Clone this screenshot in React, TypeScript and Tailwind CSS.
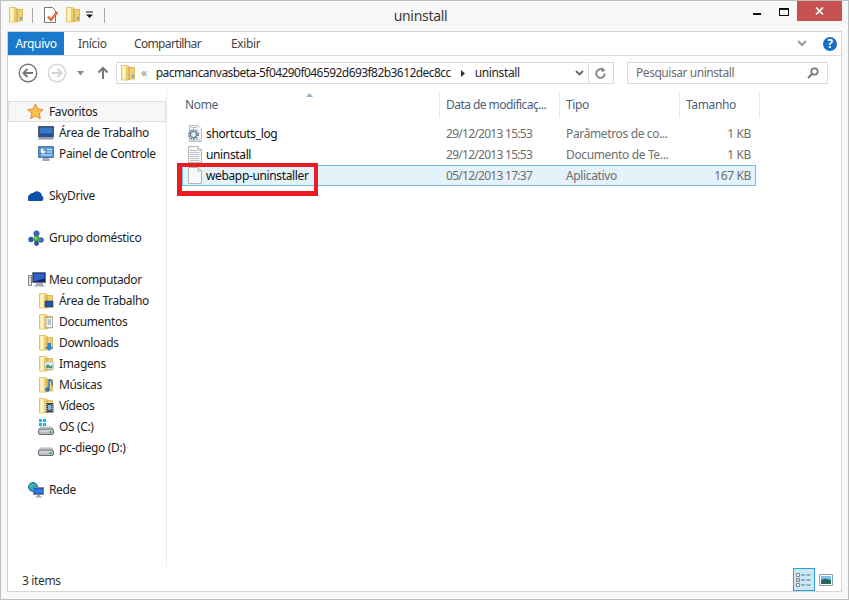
import type { ReactNode } from 'react'

const Folder = ({ children, dot }: { children?: ReactNode; dot?: boolean }) => (
  <svg width="16" height="16" viewBox="0 0 16 16" className="shrink-0">
    <path d="M8 2.500h6.500v11.500H8z" fill="#efcf72" stroke="#dcb95c" />
    <path d="M1.500 .5h6l1.500 1v13.500H1.500z" fill="#f9ebb0" stroke="#e3c569" />
    <path d="M3 1.500h1.500v13H3z" fill="#fff6d0" />
    <path d="M6 1.500h2v13.500H6z" fill="#eccb6c" />
    <path d="M8.500 1.500h1v13.500h-1z" fill="#c69c3c" />
    {dot && <path d="M12 10h1.500v2.500H12z" fill="#3aa0d8" />}
    {children}
  </svg>
)

const DocLines = ({ plain }: { plain?: boolean }) => (
  <svg width="16" height="17" viewBox="0 0 16 17" className="shrink-0">
    <path d="M1.500 .5h9.500l3.500 3.500v12.500h-13z" fill="#f8f8f8" stroke="#b4b4b4" />
    <path d="M11 .5v3.500h3.500" fill="#e4e4e4" stroke="#b4b4b4" />
    {!plain && (
      <path d="M3 4.500h7M3 6.500h9.500M3 8.500h9.500M3 10.500h9.500M3 12.500h9.500M3 14.500h9.500" stroke="#bcc5cf" strokeWidth="1" />
    )}
  </svg>
)

const GearDoc = () => (
  <svg width="16" height="17" viewBox="0 0 16 17" className="shrink-0">
    <path d="M2.500 .5h8.500l3.500 3.500v12.500h-12z" fill="#f6f6f6" stroke="#bcbcbc" />
    <path d="M4 2.500h6M4 15h9" stroke="#b4bcc6" />
    <circle cx="6.500" cy="9.500" r="4.600" fill="none" stroke="#74859a" strokeWidth="2" strokeDasharray="1.600 1.300" />
    <circle cx="6.500" cy="9.500" r="3.200" fill="#cfe0f2" stroke="#44658f" />
    <circle cx="6.500" cy="9.500" r="1.200" fill="#fff" />
  </svg>
)

const Desktop = () => (
  <svg width="16" height="14" viewBox="0 0 16 14" className="shrink-0">
    <path d="M.5 .5h15v10.500H.5z" fill="#1f3f7c" stroke="#51586a" />
    <path d="M1.500 1.500h13v8h-13z" fill="#3a79c8" />
    <path d="M1.500 7.500h13v2h-13z" fill="#1b4b9a" />
    <path d="M.5 11.500h15v2H.5z" fill="#8d96a4" />
  </svg>
)

const Panel = () => (
  <svg width="16" height="16" viewBox="0 0 16 16" className="shrink-0">
    <path d="M.5 .5h15v11H.5z" fill="#4e93dd" stroke="#58789c" />
    <circle cx="5" cy="5" r="2.400" fill="#fff" />
    <path d="M5 5V2.600A2.400 2.400 0 0 1 7.400 5z" fill="#e9842b" />
    <path d="M9 3.500h5M9 6h5M3 9h11" stroke="#e8f2fc" />
    <path d="M5 12h6l1 3H4z" fill="#a8a8a8" />
  </svg>
)

const Computer = () => (
  <svg width="18" height="16" viewBox="0 0 18 16" className="shrink-0">
    <path d="M.5 3.500h3v10h-3z" fill="#dfe3e8" stroke="#7b8490" />
    <path d="M1.500 5.500h1" stroke="#35b04a" />
    <path d="M4.500 .5h13v10h-13z" fill="#16285f" stroke="#6f7784" />
    <path d="M5.500 1.500h11v5l-11 3z" fill="#2e62cc" />
    <path d="M8 11h7v2H8zM6.500 13h10v1.500h-10z" fill="#a9afb8" />
  </svg>
)

const Drive = ({ win }: { win?: boolean }) => (
  <svg width="16" height="16" viewBox="0 0 16 16" className="shrink-0">
    {win && <path d="M1 0h3v3H1zM5 0h3v3H5zM1 4h3v3H1zM5 4h3v3H5z" fill="#12b8f0" />}
    <path d="M1 10.500 2.500 8h11L15 10.500z" fill="#e6e6e6" stroke="#8e8e8e" strokeWidth=".7" />
    <rect x=".5" y="10" width="15" height="5.500" rx="1.500" fill="#b7bdc2" stroke="#6a6f74" />
    <path d="M2 12h12" stroke="#e8eaec" />
    <rect x="11.500" y="12" width="2" height="2" fill="#3db03d" />
  </svg>
)

const Network = () => (
  <svg width="16" height="16" viewBox="0 0 16 16" className="shrink-0">
    <circle cx="5" cy="5" r="4.500" fill="#2f9fd8" stroke="#1b6fa8" />
    <path d="M1.500 3.500 4 1.500l2 1-1.500 2.500L3 6z" fill="#5cc05a" />
    <path d="M5.500 5.500h10v7h-10z" fill="#1b3f9c" stroke="#7f8792" />
    <path d="M6.500 6.500h8v5h-8z" fill="#2f7be0" />
    <path d="M9 13h3v1.500h2v1H7.500v-1H9z" fill="#9aa2ac" />
  </svg>
)

const Homegroup = () => (
  <svg width="16" height="16" viewBox="0 0 16 16" className="shrink-0">
    <circle cx="8.500" cy="3.500" r="3" fill="#3a62b8" />
    <circle cx="3" cy="9.500" r="2.700" fill="#2b5aa8" />
    <circle cx="13" cy="10" r="2.800" fill="#3f68c0" />
    <circle cx="8.500" cy="9" r="3.200" fill="#4fa83a" />
    <circle cx="8.500" cy="13.500" r="2.400" fill="#2b4f9c" />
    <circle cx="7.700" cy="8.200" r="1" fill="#bfe8a8" />
  </svg>
)

const SideRow = ({ icon, label, sub, active }: { icon: ReactNode; label: string; sub?: boolean; active?: boolean }) => (
  <div
    className={`flex h-[21px] items-center border ${sub ? 'pl-[29px]' : 'pl-[19px]'} ${
      active ? 'border-[#dedede] bg-[#f7f7f7]' : 'border-transparent'
    }`}
  >
    <span className="flex w-[21px] items-center">{icon}</span>
    <span className="text-[#1e1e1e]">{label}</span>
  </div>
)

const Spacer = () => <div className="h-[21px]" />

const files = [
  { name: 'shortcuts_log', date: '29/12/2013 15:53', type: 'Parâmetros de co...', size: '1 KB', icon: <GearDoc /> },
  { name: 'uninstall', date: '29/12/2013 15:53', type: 'Documento de Te...', size: '1 KB', icon: <DocLines /> },
  { name: 'webapp-uninstaller', date: '05/12/2013 17:37', type: 'Aplicativo', size: '167 KB', icon: <DocLines plain /> },
]

export default function App() {
  return (
    <div className="relative flex h-[600px] w-[849px] flex-col overflow-hidden border border-[#bdbdbd] bg-[#f8f8f8] px-[6px] pb-[7px] font-['Noto_Sans',sans-serif] text-[12px] tracking-[-0.36px]">
      {/* title bar */}
      <div className="relative flex h-[30px] shrink-0 items-start">
        <div className="flex items-center pt-[6px] pl-[1px]">
          <Folder dot />
          <div className="ml-[8px] h-[15px] w-px bg-[#a8a8a8]" />
          <svg width="16" height="16" viewBox="0 0 16 16" className="ml-[10px]">
            <path d="M1.500 .5h8l3 3v12h-11z" fill="#fff" stroke="#777" />
            <path d="M5 9.500 8 13l6.500-8" fill="none" stroke="#e2683a" strokeWidth="2.400" />
          </svg>
          <span className="ml-[6px]"><Folder dot /></span>
          <svg width="8" height="8" viewBox="0 0 8 8" className="ml-[5px]">
            <path d="M0 1h7" stroke="#111" />
            <path d="M0 3.500h7L3.500 7z" fill="#111" />
          </svg>
          <div className="ml-[10px] h-[15px] w-px bg-[#a8a8a8]" />
        </div>
        <div className="absolute left-0 right-[8px] top-[5px] text-center text-[14px] leading-[20px] tracking-[-0.3px] text-[#3a3a3a]">uninstall</div>
        <div className="ml-auto flex">
          <div className="flex h-[20px] w-[26px] items-start justify-center pt-[12px]">
            <div className="h-[2px] w-[8px] bg-[#111]" />
          </div>
          <div className="flex h-[20px] w-[27px] items-start justify-center pt-[7px]">
            <div className="h-[8px] w-[10px] border border-t-2 border-[#111]" />
          </div>
          <div className="flex h-[20px] w-[45px] items-center justify-center bg-[#c75050]">
            <svg width="9" height="8" viewBox="0 0 9 8">
              <path d="M1 .5l7 7M8 .5l-7 7" stroke="#fff" strokeWidth="1.700" />
            </svg>
          </div>
        </div>
      </div>

      <div className="flex min-h-0 flex-1 flex-col border border-[#d4d4d4] bg-white">
        {/* ribbon tabs */}
        <div className="flex h-[24px] shrink-0 items-center border-b border-[#dadbdc]">
          <div className="flex h-[23px] w-[56px] items-center justify-center bg-[#1979ca] text-[#fff]">Arquivo</div>
          <div className="ml-[14px] w-[56px] text-[#444]">Início</div>
          <div className="w-[97px] tracking-[-0.65px] text-[#444]">Compartilhar</div>
          <div className="text-[#444]">Exibir</div>
          <svg width="10" height="7" viewBox="0 0 10 7" className="ml-auto mr-[16px]">
            <path d="M1 1l4 4 4-4" fill="none" stroke="#9a9a9a" strokeWidth="2" />
          </svg>
          <div className="mr-[4px] flex h-[14px] w-[14px] items-center justify-center rounded-full bg-[#1370c4] text-[12px] font-bold tracking-normal text-white">?</div>
        </div>

        {/* address row */}
        <div className="flex h-[34px] shrink-0 items-center">
          <svg width="20" height="20" viewBox="0 0 20 20" className="ml-[10px]">
            <circle cx="10" cy="10" r="8.700" fill="#fff" stroke="#777" strokeWidth="1.400" />
            <path d="M15 10H6M9.500 6 5.500 10l4 4" fill="none" stroke="#777" strokeWidth="2" />
          </svg>
          <svg width="20" height="20" viewBox="0 0 20 20" className="ml-[9px]">
            <circle cx="10" cy="10" r="8.700" fill="#fff" stroke="#d4d4d4" strokeWidth="1.400" />
            <path d="M5 10h9M10.500 6l4 4-4 4" fill="none" stroke="#d4d4d4" strokeWidth="2" />
          </svg>
          <svg width="8" height="5" viewBox="0 0 8 5" className="ml-[10px]">
            <path d="M0 0h7L3.500 4.500z" fill="#8a8a8a" />
          </svg>
          <svg width="12" height="14" viewBox="0 0 12 14" className="ml-[12px]">
            <path d="M6 13V2M1.500 6.500 6 2l4.500 4.500" fill="none" stroke="#777" strokeWidth="2" />
          </svg>
          <div className="ml-[7px] flex h-[22px] w-[498px] items-center border border-[#d9d9d9]">
            <span className="ml-[3px]"><Folder dot /></span>
            <span className="ml-[5px] text-[#888]">«</span>
            <span className="ml-[9px] tracking-[-0.56px] text-[#1e1e1e]">pacmancanvasbeta-5f04290f046592d693f82b3612dec8cc</span>
            <svg width="5" height="7" viewBox="0 0 5 7" className="ml-[10px]"><path d="M0 0l4 3.500L0 7z" fill="#333" /></svg>
            <span className="ml-[9px] text-[#1e1e1e]">uninstall</span>
            <svg width="9" height="6" viewBox="0 0 9 6" className="ml-auto mr-[4px]">
              <path d="M1 1l3.500 3.500L8 1" fill="none" stroke="#666" strokeWidth="1.800" />
            </svg>
            <div className="flex h-full w-[25px] items-center justify-center border-l border-[#d9d9d9]">
              <svg width="12" height="13" viewBox="0 0 12 13">
                <path d="M9.800 6.500a4.300 4.300 0 1 1-2-3.600" fill="none" stroke="#808080" strokeWidth="1.800" />
                <path d="M6.500 0v5l4-1.500z" fill="#808080" />
              </svg>
            </div>
          </div>
          <div className="ml-[13px] flex h-[22px] w-[201px] items-center border border-[#d9d9d9] pl-[8px] pr-[8px] tracking-[-0.45px] text-[#6d6d6d]">
            Pesquisar uninstall
            <svg width="12" height="12" viewBox="0 0 12 12" className="ml-auto">
              <circle cx="7.500" cy="4.500" r="3.200" fill="none" stroke="#777" strokeWidth="1.700" />
              <path d="M5 7l-4 4" stroke="#777" strokeWidth="2" />
            </svg>
          </div>
        </div>

        <div className="flex min-h-0 flex-1">
          {/* nav pane */}
          <div className="w-[159px] shrink-0 border-r border-[#ececec] pt-[11px]">
            <SideRow active icon={<svg width="17" height="17" viewBox="0 0 17 17" className="-ml-px"><path d="M8.500 1l2.300 5 5.400 .6-4 3.700 1.100 5.400-4.800-2.700-4.800 2.700 1.100-5.400-4-3.700 5.400-.6z" fill="#fbc04c" stroke="#e8863a" /></svg>} label="Favoritos" />
            <SideRow sub icon={<Desktop />} label="Área de Trabalho" />
            <SideRow sub icon={<Panel />} label="Painel de Controle" />
            <Spacer />
            <SideRow icon={<svg width="16" height="11" viewBox="0 0 16 11"><path d="M1 11a2.700 2.700 0 0 1-.3-5.200A4.500 4.500 0 0 1 5 3a5 5 0 0 1 8.800 2.800A3 3 0 0 1 14 11z" fill="#0f4fa8" /></svg>} label="SkyDrive" />
            <Spacer />
            <SideRow icon={<Homegroup />} label="Grupo doméstico" />
            <Spacer />
            <SideRow icon={<Computer />} label="Meu computador" />
            <SideRow sub icon={<Folder><path d="M7 8h8v6H7z" fill="#1f55a8" stroke="#333" strokeWidth=".6" /></Folder>} label="Área de Trabalho" />
            <SideRow sub icon={<Folder><path d="M8 3.500h6.500v10H8z" fill="#f5f7fa" stroke="#8a96a6" strokeWidth=".6" /><path d="M9.500 6h3.500M9.500 8h3.500M9.500 10h3.500" stroke="#7c8ea4" /></Folder>} label="Documentos" />
            <SideRow sub icon={<Folder><path d="M9.500 8h3.500v4h2.500l-4.250 4-4.250-4h2.500z" fill="#2b86d8" /></Folder>} label="Downloads" />
            <SideRow sub icon={<Folder><path d="M7 6h8.500v7H7z" fill="#e8f2fa" stroke="#9aa6b2" strokeWidth=".6" /><path d="M8 10l2-2 2 2 2.500-1v3H8z" fill="#4f9a7c" /></Folder>} label="Imagens" />
            <SideRow sub icon={<Folder><path d="M11 2.500v10" stroke="#1e78c8" strokeWidth="1.400" /><circle cx="9.500" cy="12.500" r="2.300" fill="#1e78c8" /><path d="M11 2.500c3 1 4 3 3 6" fill="none" stroke="#1e78c8" strokeWidth="1.400" /></Folder>} label="Músicas" />
            <SideRow sub icon={<Folder><path d="M8 5h7.500v9.500H8z" fill="#3c4a58" /><path d="M10 7h3.500v5H10z" fill="#7fb4d8" /><path d="M8.700 6v8M14.800 6v8" stroke="#e4e4e4" strokeDasharray="1 1" /></Folder>} label="Vídeos" />
            <SideRow sub icon={<Drive win />} label="OS (C:)" />
            <SideRow sub icon={<Drive />} label="pc-diego (D:)" />
            <Spacer />
            <SideRow icon={<Network />} label="Rede" />
          </div>

          {/* file list */}
          <div className="relative min-w-0 flex-1 pl-[15px]">
            <svg width="7" height="4" viewBox="0 0 7 4" className="absolute left-[139px] top-[3px]">
              <path d="M3.500 0 7 4H0z" fill="#8fb4d4" />
            </svg>
            <div className="mt-[1px] flex h-[27px] text-[#4c607a]">
              <div className="flex w-[257px] items-center pl-[3px]">Nome</div>
              <div className="flex w-[120px] items-center border-l border-[#e5e8ec] pl-[6px] tracking-[-0.54px]">Data de modificaç...</div>
              <div className="flex w-[120px] items-center border-l border-[#e5e8ec] pl-[6px]">Tipo</div>
              <div className="flex w-[81px] items-center border-l border-r border-[#e5e8ec] pl-[6px]">Tamanho</div>
            </div>
            <div className="mt-[5px] flex w-[574px] flex-col">
              {files.map((f, i) => (
                <div
                  key={f.name}
                  className={`flex h-[21px] items-center border ${
                    i === 2 ? 'border-[#75bde6] bg-[#e4f2f9]' : 'border-transparent'
                  }`}
                >
                  <span className="ml-[4px] flex w-[19px] items-center">{f.icon}</span>
                  <span className="w-[240px] text-[#111]">{f.name}</span>
                  <span className="w-[120px] tracking-[-0.72px] text-[#6d6d6d]">{f.date}</span>
                  <span className="w-[120px] text-[#6d6d6d]">{f.type}</span>
                  <span className="ml-auto pr-[4px] text-[#6d6d6d]">{f.size}</span>
                </div>
              ))}
            </div>
            {/* red annotation box */}
            <div className="absolute left-[10px] top-[73px] h-[33px] w-[141px] border-[4px] border-b-[5px] border-l-[5px] border-[#ed1c24]" />
          </div>
        </div>

        {/* status bar */}
        <div className="flex h-[24px] shrink-0 items-end">
          <span className="mb-[1px] ml-[14px] text-[#333]">3 items</span>
          <div className="ml-auto flex h-[23px] w-[22px] items-center justify-center border border-[#2f9fe0] bg-[#cbe8f6]">
            <svg width="16" height="14" viewBox="0 0 16 14">
              <path d="M.5 .5h3v3h-3zM.5 5.500h3v3h-3zM.5 10.500h3v3h-3z" fill="#fff" stroke="#667" strokeWidth=".8" />
              <path d="M1.500 6.500h1v1h-1z" fill="#d02020" />
              <path d="M5 2h4M10.500 2h4M5 7h4M10.500 7h4M5 12h4M10.500 12h4" stroke="#56708c" strokeWidth="1.200" />
            </svg>
          </div>
          <div className="ml-[4px] mr-[8px] flex h-[23px] items-center">
            <svg width="14" height="12" viewBox="0 0 14 12">
              <path d="M.5 .5h13v11H.5z" fill="#fff" stroke="#8aa0b8" />
              <path d="M2 2h10v4H2z" fill="#7cc4ee" />
              <path d="M2 6l4-1.500L12 6v4H2z" fill="#27685c" />
            </svg>
          </div>
        </div>
      </div>
    </div>
  )
}
